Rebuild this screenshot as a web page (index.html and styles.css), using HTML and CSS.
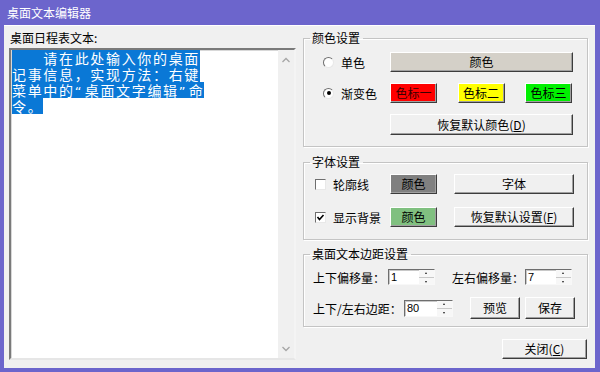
FILE: index.html
```html
<!DOCTYPE html>
<html lang="zh-CN">
<head>
<meta charset="utf-8">
<title>桌面文本编辑器</title>
<link rel="stylesheet" href="styles.css">
</head>
<body>
<div class="window">
  <div class="titlebar">桌面文本编辑器</div>
  <div class="client">
    <div class="left">
      <div class="label">桌面日程表文本:</div>
      <div class="memo">
        <div class="memo-text">
          <span class="sel">　　请在此处输入你的桌面</span>
          <span class="sel">记事信息，实现方法：右键</span>
          <span class="sel">菜单中的<span class="q">“</span>桌面文字编辑<span class="q">”</span>命</span>
          <span class="sel">令。</span>
        </div>
        <div class="vscroll">
          <svg class="chev" width="10" height="6" viewBox="0 0 10 6"><polyline points="1.5,5 5,1.5 8.5,5" fill="none" stroke="#a6a6a6" stroke-width="1.3"/></svg>
          <svg class="chev" width="10" height="6" viewBox="0 0 10 6"><polyline points="1.5,1 5,4.5 8.5,1" fill="none" stroke="#a6a6a6" stroke-width="1.3"/></svg>
        </div>
      </div>
    </div>
    <div class="right">
      <fieldset class="group">
        <legend>颜色设置</legend>
        <div class="color-grid">
          <div class="opt"><span class="rb"></span>单色</div>
          <div class="btn beige">颜色</div>
          <div class="opt"><span class="rb on"></span>渐变色</div>
          <div class="swatches">
            <div class="btn sw red">色标一</div>
            <div class="btn sw yellow">色标二</div>
            <div class="btn sw green">色标三</div>
          </div>
          <div></div>
          <div class="btn tall">恢复默认颜色(<u>D</u>)</div>
        </div>
      </fieldset>
      <fieldset class="group g2">
        <legend>字体设置</legend>
        <div class="font-grid">
          <div class="opt"><span class="cb"></span>轮廓线</div>
          <div class="btn sw dark">颜色</div>
          <div class="btn">字体</div>
          <div class="opt"><span class="cb"><svg width="9" height="9" viewBox="0 0 9 9"><polyline points="1.5,4 3.5,6.5 7.5,2" fill="none" stroke="#000" stroke-width="1.6"/></svg></span>显示背景</div>
          <div class="btn sw lgreen">颜色</div>
          <div class="btn">恢复默认设置(<u>F</u>)</div>
        </div>
      </fieldset>
      <fieldset class="group g3">
        <legend>桌面文本边距设置</legend>
        <div class="margin-rows">
          <div class="mrow">
            <span class="mlabel w1">上下偏移量：</span>
            <div class="spin s1"><span class="val">1</span><span class="arrows"><span class="ar up"></span><span class="ar dn"></span></span></div>
            <span class="mlabel w2">左右偏移量：</span>
            <div class="spin s1"><span class="val">7</span><span class="arrows"><span class="ar up"></span><span class="ar dn"></span></span></div>
          </div>
          <div class="mrow r2">
            <span class="mlabel w3">上下/左右边距：</span>
            <div class="spin s2"><span class="val">80</span><span class="arrows"><span class="ar up"></span><span class="ar dn"></span></span></div>
            <div class="btn act first">预览</div>
            <div class="btn act">保存</div>
          </div>
        </div>
      </fieldset>
      <div class="btn close">关闭(<u>C</u>)</div>
    </div>
  </div>
</div>
</body>
</html>
```
FILE: styles.css
```css
html, body {
  margin: 0;
  padding: 0;
}
body {
  width: 600px;
  height: 372px;
  overflow: hidden;
  font-family: "Noto Sans CJK SC", "Noto Sans", sans-serif;
  font-size: 12px;
  color: #000;
}
.window {
  width: 600px;
  height: 372px;
  background: #6c65cc;
  display: flex;
  flex-direction: column;
  box-sizing: border-box;
}
.titlebar {
  height: 25px;
  line-height: 25px;
  padding-left: 7px;
  color: #fff;
  font-size: 12px;
  flex: none;
}
.client {
  flex: 1;
  margin: 0 5px 4px 4px;
  background: #f0f0f0;
  display: flex;
  gap: 7px;
  padding: 6px 7px 8px 5px;
  box-shadow: inset 0 1px #fff;
}
.left {
  width: 287px;
  display: flex;
  flex-direction: column;
}
.label {
  height: 17px;
  line-height: 14px;
  padding-left: 1px;
}
.memo {
  flex: 1;
  display: flex;
  background: #fff;
  border: 2px solid;
  border-color: #7a7a7a #f4f4f4 #e6e6e6 #7a7a7a;
  box-shadow: inset 1px 1px #d8d8d8;
}
.memo-text {
  flex: 1;
  padding-left: 1px;
}
.sel {
  display: block;
  width: max-content;
  height: 16px;
  line-height: 16px;
  font-size: 14px;
  letter-spacing: 1.67px;
  background: #0a78d6;
  color: #fff;
}
.sel .q {
  font-family: "DejaVu Sans", sans-serif;
  font-size: 13px;
  letter-spacing: 3.3px;
}
.vscroll {
  width: 16px;
  background: #f0f0f0;
  display: flex;
  flex-direction: column;
  justify-content: space-between;
  align-items: center;
  padding: 7px 0 6px;
}
.chev { display: block; }
.right {
  width: 285px;
  display: flex;
  flex-direction: column;
}
.group {
  margin: 0;
  padding: 0;
  border: 1px solid #c4c4c4;
  box-shadow: inset 1px 1px #fff, 1px 1px #fff;
  min-inline-size: 0;
}
.group legend {
  margin-left: 6px;
  padding: 0 3px 0 2px;
  line-height: 14px;
  height: 14px;
}
.color-grid {
  display: grid;
  grid-template-columns: 67px 1fr;
  grid-template-rows: 20px 20px 21px;
  row-gap: 11px;
  padding: 7px 14px 11px 19px;
}
.opt {
  display: flex;
  align-items: center;
  white-space: nowrap;
}
.rb {
  width: 9px;
  height: 9px;
  border-radius: 50%;
  border: 1px solid;
  border-color: #6e6e6e #e8e8e8 #e8e8e8 #6e6e6e;
  background: #fff;
  margin-right: 7px;
  position: relative;
  flex: none;
}
.rb.on::after {
  content: "";
  position: absolute;
  left: 2.5px;
  top: 2.5px;
  width: 4px;
  height: 4px;
  border-radius: 50%;
  background: #000;
}
.btn {
  display: flex;
  align-items: center;
  justify-content: center;
  box-sizing: border-box;
  background: #f0f0f0;
  border: 1px solid;
  border-color: #fff #3c3c3c #3c3c3c #fff;
  box-shadow: inset -1px -1px #a0a0a0;
  white-space: nowrap;
  line-height: 14px;
}
.btn u { text-decoration: underline; }
.beige { background: #d4d0c8; }
.swatches {
  display: flex;
  justify-content: space-between;
  padding-right: 1px;
}
.sw { width: 47px; }
.red { background: #ff0000; color: #3a0000; }
.yellow { background: #ffff00; }
.green { background: #00f000; }
.dark { background: #808080; }
.lgreen { background: #80c080; }
.g2 { margin-top: 8px; }
.font-grid {
  display: grid;
  grid-template-columns: 75px 47px 120px;
  column-gap: 0;
  grid-template-rows: 20px 20px;
  row-gap: 13px;
  padding: 5px 13px 12px 11px;
}
.font-grid .btn:nth-child(3n) { margin-left: 17px; width: 120px; }
.cb {
  width: 11px;
  height: 11px;
  box-sizing: border-box;
  border: 1px solid;
  border-color: #6e6e6e #e8e8e8 #e8e8e8 #6e6e6e;
  background: #fff;
  margin-right: 7px;
  display: flex;
  align-items: center;
  justify-content: center;
  flex: none;
}
.cb svg { display: block; }
.g3 { margin-top: 7px; }
.margin-rows {
  padding: 8px 10px 7px 9px;
  display: flex;
  flex-direction: column;
  gap: 12px;
}
.mrow {
  display: flex;
  align-items: center;
  height: 16px;
}
.mrow.r2 { height: 22px; }
.mlabel { white-space: nowrap; flex: none; }
.w1 { width: 75px; }
.w2 { width: 73px; margin-left: 17px; }
.w3 { width: 91px; }
.spin {
  display: flex;
  box-sizing: border-box;
  background: #fff;
  border: 1px solid;
  border-color: #6e6e6e #f8f8f8 #f8f8f8 #6e6e6e;
  box-shadow: inset 1px 1px #c8c8c8;
  flex: none;
}
.s1 { width: 47px; height: 16px; }
.s2 { width: 49px; height: 17px; }
.val {
  flex: 1;
  font-family: "Liberation Sans", sans-serif;
  font-size: 11px;
  line-height: 14px;
  padding-left: 2px;
}
.arrows {
  width: 15px;
  display: flex;
  flex-direction: column;
  background: #f7f7f7;
}
.ar {
  flex: 1;
  position: relative;
}
.ar.up { border-bottom: 1px solid #c8c8c8; }
.ar::after {
  content: "";
  position: absolute;
  left: 6px;
  top: 2px;
  border-left: 1.5px solid transparent;
  border-right: 1.5px solid transparent;
}
.ar.up::after { border-bottom: 2px solid #202020; }
.ar.dn::after { border-top: 2px solid #202020; top: 3px; }
.act { width: 50px; height: 22px; }
.act.first { margin-left: 17px; margin-right: 5px; }
.close {
  margin-top: 12px;
  align-self: flex-end;
  width: 85px;
  height: 20px;
  margin-right: 1px;
}
```
